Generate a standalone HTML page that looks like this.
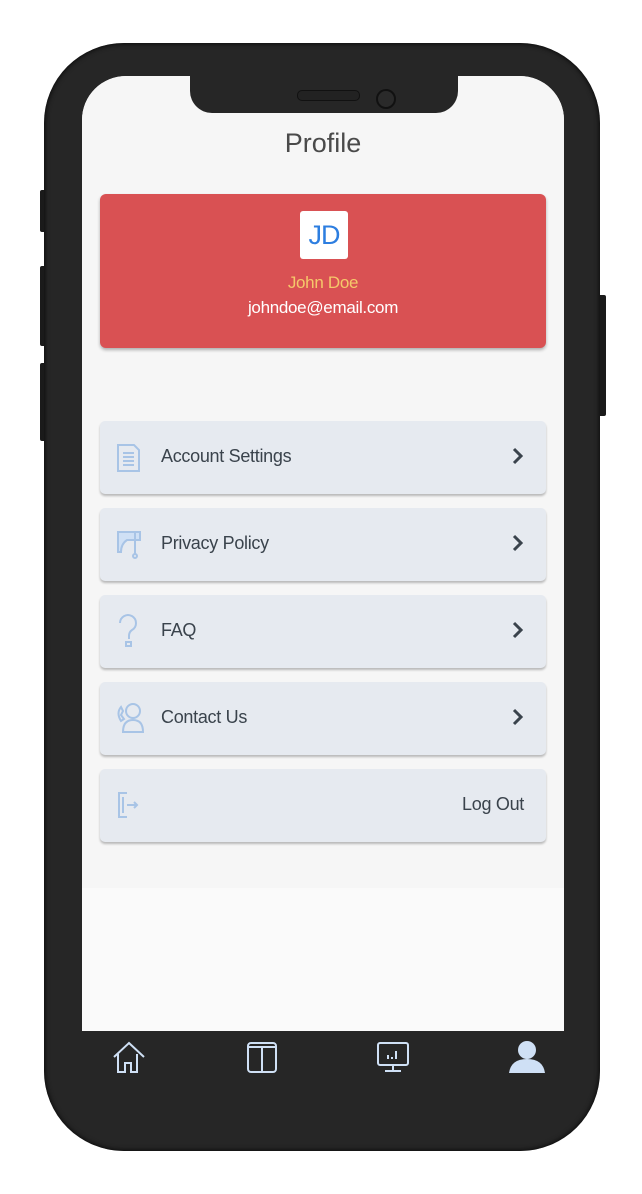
<!DOCTYPE html>
<html><head><style>
body{margin:0;width:642px;height:1194px;background:#fff;position:relative;overflow:hidden;font-family:"Liberation Sans",sans-serif}
.abs{position:absolute}
.phone{left:44px;top:43px;width:556px;height:1108px;background:#262626;border-radius:80px;box-shadow:inset 0 0 6px #000}
.btn{background:#1a1a1a;border-radius:2px}
.screen{left:82px;top:76px;width:482px;height:955px;background:#fafafa;border-radius:44px 44px 0 0;overflow:hidden}
.top{left:0;top:0;width:482px;height:812px;background:#f6f6f6}
.notch{left:108px;top:-4px;width:268px;height:41px;background:#262626;border-radius:0 0 22px 22px}
.row{left:18px;width:446px;height:73px;background:#e6eaf0;border-radius:5px;box-shadow:0 2px 2px rgba(0,0,0,.25);color:#3a434c;font-size:18px;letter-spacing:-0.3px}
.row .t{position:absolute;left:61px;top:25px}
.row .ch{position:absolute;right:22px;top:26px}
.row svg.i{position:absolute;left:15px;top:22px}
</style></head><body>
<div class="abs btn" style="left:40px;top:190px;width:6px;height:42px"></div>
<div class="abs btn" style="left:40px;top:266px;width:6px;height:80px"></div>
<div class="abs btn" style="left:40px;top:363px;width:6px;height:78px"></div>
<div class="abs btn" style="left:598px;top:295px;width:8px;height:121px"></div>
<div class="abs phone"></div>
<div class="abs screen">
 <div class="abs top"></div>
 <div class="abs notch"></div>
 <div class="abs" style="left:215px;top:14px;width:61px;height:9px;border:1px solid #111;border-radius:5px;background:#222"></div>
 <div class="abs" style="left:294px;top:13px;width:16px;height:16px;border:2px solid #111;border-radius:50%;background:#2a2a2a"></div>
 <div class="abs" style="left:0;width:482px;top:52px;text-align:center;font-size:27px;color:#4a4a4a">Profile</div>
 <div class="abs" style="left:18px;top:118px;width:446px;height:154px;background:#d95153;border-radius:6px;box-shadow:0 2px 3px rgba(0,0,0,.3);text-align:center;letter-spacing:-0.3px">
  <div class="abs" style="left:200px;top:17px;width:48px;height:48px;background:#fff;border-radius:3px;color:#2d7ee0;font-size:27px;line-height:48px;letter-spacing:-1px">JD</div>
  <div class="abs" style="left:0;width:446px;top:79px;color:#f5c86a;font-size:17px">John Doe</div>
  <div class="abs" style="left:0;width:446px;top:104px;color:#fff;font-size:17px">johndoe@email.com</div>
 </div>
 <div class="abs row" style="top:345px"><svg class="i" width="28" height="30" fill="none" stroke="#a8c4e6" stroke-width="2"><path d="M3 2h16l5 5v21H3z"/><path d="M8 10h11M8 14h11M8 18h11M8 22h11"/></svg><span class="t">Account Settings</span><svg class="ch" width="12" height="20"><path d="M2 2l7 7-7 7" stroke="#3a434c" stroke-width="3" fill="none"/></svg></div>
 <div class="abs row" style="top:432px"><svg class="i" width="30" height="30" fill="none" stroke="#a8c4e6" stroke-width="2"><path d="M3 2h22v8H12Q6 14 6 22H3z" fill="#cfe0f5"/><path d="M20 3v21"/><circle cx="20" cy="26" r="2"/></svg><span class="t">Privacy Policy</span><svg class="ch" width="12" height="20"><path d="M2 2l7 7-7 7" stroke="#3a434c" stroke-width="3" fill="none"/></svg></div>
 <div class="abs row" style="top:519px"><svg class="i" width="28" height="34" style="top:18px" fill="none" stroke="#a8c4e6" stroke-width="2"><path d="M5 10a8 8 0 1 1 12 7q-3 2-3 6v3"/><rect x="11" y="29" width="5" height="4"/></svg><span class="t">FAQ</span><svg class="ch" width="12" height="20"><path d="M2 2l7 7-7 7" stroke="#3a434c" stroke-width="3" fill="none"/></svg></div>
 <div class="abs row" style="top:606px"><svg class="i" width="30" height="34" style="top:18px" fill="none" stroke="#a8c4e6" stroke-width="2"><circle cx="18" cy="11" r="7"/><path d="M8 32q0-12 10-12t10 12z"/><path d="M6 7q-5 6 0 14l3-2-3-4 2-4z"/></svg><span class="t">Contact Us</span><svg class="ch" width="12" height="20"><path d="M2 2l7 7-7 7" stroke="#3a434c" stroke-width="3" fill="none"/></svg></div>
 <div class="abs row" style="top:693px"><svg class="i" width="28" height="30" fill="none" stroke="#a8c4e6" stroke-width="2"><path d="M12 2H4v24h8M8 6v16M12 14h10M19 11l3 3-3 3"/></svg><span class="t" style="left:auto;right:22px">Log Out</span></div>
</div>
<svg class="abs" style="left:112px;top:1040px" width="34" height="34" fill="none" stroke="#cfe0f5" stroke-width="2"><path d="M2 17L17 3l15 14M6 14v18h7v-9h6v9h6V14"/></svg>
<svg class="abs" style="left:246px;top:1040px" width="32" height="34" fill="none" stroke="#cfe0f5" stroke-width="2"><rect x="2" y="3" width="28" height="29" rx="3"/><path d="M2 7h28M16 7v25"/></svg>
<svg class="abs" style="left:376px;top:1041px" width="34" height="32" fill="none" stroke="#cfe0f5" stroke-width="2"><rect x="2" y="2" width="30" height="22" rx="2"/><path d="M17 24v5M9 30h16M12 18v-4M16 18v-2M20 18v-8"/></svg>
<svg class="abs" style="left:508px;top:1040px" width="38" height="34"><circle cx="19" cy="10" r="9" fill="#cfe0f5"/><path d="M1 33q2-14 18-14t18 14z" fill="#cfe0f5"/></svg>
</body></html>
